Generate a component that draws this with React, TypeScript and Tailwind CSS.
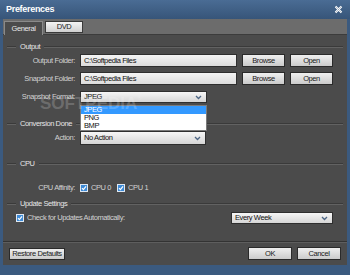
import React from 'react';

const Check = () => (
  <svg width="8" height="8" viewBox="0 0 8 8" className="shrink-0">
    <rect x="0.5" y="0.5" width="7" height="7" fill="#3d8ad6" stroke="#dfe8f2" />
    <path d="M2 4.2 L3.4 5.6 L6 2.4" stroke="#ffffff" strokeWidth="1.2" fill="none" />
  </svg>
);

const Arrow = () => (
  <svg width="7" height="5" viewBox="0 0 7 5" className="shrink-0">
    <path d="M1 1 L3.5 3.5 L6 1" stroke="#4d6685" strokeWidth="1.3" fill="none" />
  </svg>
);

const GroupHeader = ({ title, className }: { title: string; className: string }) => (
  <div className={`flex items-center h-[10px] pl-[4px] pr-[4px] ${className}`}>
    <div className="w-[9px] border-t border-[#3a3a3a] border-b-[#626262] border-b h-0" />
    <span className="px-[4px] text-[#e6e6e6] leading-none">{title}</span>
    <div className="flex-1 border-t border-[#3a3a3a] border-b-[#626262] border-b h-0" />
  </div>
);

const Field = ({ value, w }: { value: string; w: string }) => (
  <div className={`${w} h-[13px] border border-[#2e2e2e] bg-gradient-to-b from-[#f4f4f4] to-[#dcdcdc] text-[#111] pl-[3px] flex items-center leading-none`}>
    {value}
  </div>
);

const Select = ({ value, w, h = 'h-[13px]' }: { value: string; w: string; h?: string }) => (
  <div className={`${w} ${h} border border-[#2e2e2e] bg-gradient-to-b from-[#f6f6f6] to-[#d6d6d6] text-[#111] pl-[3px] pr-[4px] flex items-center justify-between leading-none`}>
    <span>{value}</span>
    <Arrow />
  </div>
);

const Btn = ({ label, w, h = 'h-[13px]' }: { label: string; w: string; h?: string }) => (
  <div className={`${w} ${h} border border-[#2a2a2a] bg-gradient-to-b from-[#efefef] to-[#cbcbcb] text-[#1a1a1a] flex items-center justify-center leading-none whitespace-nowrap`}>
    {label}
  </div>
);

const Label = ({ text }: { text: string }) => (
  <div className="w-[73px] text-right text-[#d2d2d2] leading-none pr-[1px] whitespace-nowrap">{text}</div>
);

export default function App() {
  return (
    <div className="w-[350px] h-[275px] bg-[#3b5a7f] flex flex-col relative overflow-hidden font-['Liberation_Sans',Arial,sans-serif] text-[7.5px] tracking-[-0.4px]">
      {/* title bar */}
      <div className="h-[19px] flex items-center justify-between px-[6px] bg-gradient-to-b from-[#4a6c94] to-[#375579]">
        <span className="text-white font-bold text-[9px] tracking-[-0.3px] leading-none">Preferences</span>
        <svg width="9" height="9" viewBox="0 0 9 9" className="mr-[1px]">
          <path d="M1.5 1.5 L7.5 7.5 M7.5 1.5 L1.5 7.5" stroke="#ffffff" strokeWidth="2" />
          <path d="M1.5 1.5 L7.5 7.5 M7.5 1.5 L1.5 7.5" stroke="#8a9bb0" strokeWidth="0.6" />
        </svg>
      </div>

      <div className="flex-1 mx-[3px] flex flex-col bg-[#4b4b4b]">
        {/* tabs */}
        <div className="h-[16px] bg-[#6c6c6c] flex items-end pl-[1px] gap-[2px] border-b border-[#3c3c3c]">
          <div className="w-[39px] h-[14px] bg-[#4b4b4b] border border-b-0 border-[#8a8a8a] text-[#e8e8e8] flex items-center justify-center leading-none -mb-[1px]">
            General
          </div>
          <div className="w-[38px] h-[12px] mb-[1px] bg-gradient-to-b from-[#f4f4f4] to-[#d0d0d0] border border-[#3a3a3a] text-[#222] flex items-center justify-center leading-none">
            DVD
          </div>
        </div>

        <GroupHeader title="Output" className="mt-[7px]" />
        <div className="flex items-center mt-[2px]">
          <Label text="Output Folder:" />
          <div className="ml-[4px] flex gap-[5px]">
            <Field value="C:\Softpedia Files" w="w-[157px]" />
            <Btn label="Browse" w="w-[43px]" />
            <Btn label="Open" w="w-[43px]" />
          </div>
        </div>
        <div className="flex items-center mt-[5px]">
          <Label text="Snapshot Folder:" />
          <div className="ml-[4px] flex gap-[5px]">
            <Field value="C:\Softpedia Files" w="w-[157px]" />
            <Btn label="Browse" w="w-[43px]" />
            <Btn label="Open" w="w-[43px]" />
          </div>
        </div>
        <div className="flex items-center mt-[6px]">
          <Label text="Snapshot Format:" />
          <div className="ml-[4px]">
            <Select value="JPEG" w="w-[127px]" h="h-[12px]" />
          </div>
        </div>

        <GroupHeader title="Conversion Done" className="mt-[16px]" />
        <div className="flex items-center mt-[2px]">
          <Label text="Action:" />
          <div className="ml-[4px]">
            <Select value="No Action" w="w-[126px]" h="h-[14px]" />
          </div>
        </div>

        <GroupHeader title="CPU" className="mt-[14px]" />
        <div className="flex items-center mt-[12px] h-[13px]">
          <Label text="CPU Affinity:" />
          <div className="ml-[4px] flex items-center text-[#d2d2d2] leading-none">
            <Check />
            <span className="ml-[3px]">CPU 0</span>
            <span className="ml-[6px]"><Check /></span>
            <span className="ml-[3px]">CPU 1</span>
          </div>
        </div>

        <GroupHeader title="Update Settings" className="mt-[5px]" />
        <div className="flex items-center mt-[3px] pl-[13px] pr-[14px]">
          <Check />
          <span className="ml-[3px] text-[#d2d2d2] leading-none">Check for Updates Automatically:</span>
          <div className="ml-auto">
            <Select value="Every Week" w="w-[102px]" h="h-[12px]" />
          </div>
        </div>

        <div className="mt-[17px] border-t border-[#333] border-b border-b-[#5e5e5e]" />

        <div className="flex items-center mt-[4px] pl-[6px] pr-[6px]">
          <Btn label="Restore Defaults" w="w-[56px]" h="h-[12px]" />
          <div className="ml-auto flex gap-[5px]">
            <Btn label="OK" w="w-[44px]" h="h-[13px]" />
            <Btn label="Cancel" w="w-[44px]" h="h-[13px]" />
          </div>
        </div>
      </div>

      <div className="h-[10px]" />

      {/* open dropdown list */}
      <div className="absolute left-[80px] top-[105px] w-[127px] bg-white border border-[#7a7a7a] text-[#111] leading-none">
        <div className="h-[8px] bg-[#3399ff] text-white pl-[3px] flex items-center">JPEG</div>
        <div className="h-[8px] pl-[3px] flex items-center">PNG</div>
        <div className="h-[8px] pl-[3px] flex items-center">BMP</div>
      </div>

      {/* watermark */}
      <div className="absolute left-[40px] top-[95px] text-[17px] font-bold tracking-normal text-white/20 leading-none pointer-events-none">
        SOFTPEDIA<span className="text-[6px] align-top">®</span>
      </div>
    </div>
  );
}
